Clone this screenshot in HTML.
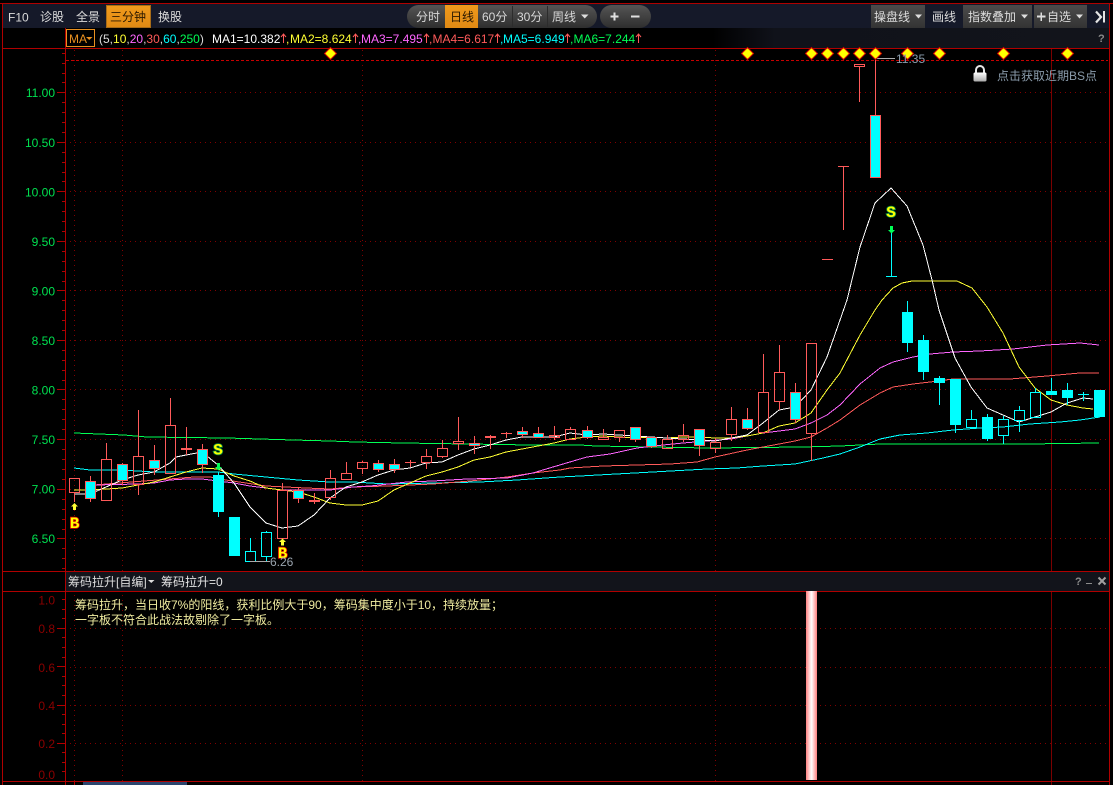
<!DOCTYPE html>
<html><head><meta charset="utf-8"><style>
html,body{margin:0;padding:0;background:#000;width:1113px;height:785px;overflow:hidden}
svg{display:block;font-family:"Liberation Sans","Noto Sans CJK SC",sans-serif;font-size:12px}
</style></head><body>
<svg width="1113" height="785" viewBox="0 0 1113 785" xmlns="http://www.w3.org/2000/svg">
<defs>
<linearGradient id="pill" x1="0" y1="0" x2="0" y2="1"><stop offset="0" stop-color="#555"/><stop offset="1" stop-color="#2e2e2e"/></linearGradient>
<linearGradient id="btn" x1="0" y1="0" x2="0" y2="1"><stop offset="0" stop-color="#4c4c4c"/><stop offset="1" stop-color="#333"/></linearGradient>
<linearGradient id="org" x1="0" y1="0" x2="0" y2="1"><stop offset="0" stop-color="#f09a1c"/><stop offset="1" stop-color="#e08a14"/></linearGradient>
<linearGradient id="bar" x1="0" y1="0" x2="1" y2="0"><stop offset="0" stop-color="#ff8080"/><stop offset=".5" stop-color="#fff"/><stop offset="1" stop-color="#ff8080"/></linearGradient>
<linearGradient id="lock" x1="0" y1="0" x2="0" y2="1"><stop offset="0" stop-color="#fff"/><stop offset="1" stop-color="#aaa"/></linearGradient>
<linearGradient id="mabar" x1="0" y1="0" x2="1" y2="0"><stop offset="0" stop-color="#000"/><stop offset=".62" stop-color="#000"/><stop offset=".68" stop-color="#10121a"/><stop offset="1" stop-color="#12141b"/></linearGradient>
<pattern id="dh" patternUnits="userSpaceOnUse" width="5" height="1"><rect width="1" height="1" fill="#800000"/></pattern>
<pattern id="dv" patternUnits="userSpaceOnUse" width="1" height="5"><rect width="1" height="1" fill="#800000"/></pattern>
</defs>
<rect width="1113" height="785" fill="#000"/>
<rect x="3" y="4" width="1106" height="24" fill="#151929"/>
<rect x="66" y="28" width="1043" height="20" fill="url(#mabar)"/>
<rect x="66" y="572" width="1043" height="19" fill="#12141b"/>

<g shape-rendering="crispEdges" fill="none">
<!-- dotted grid -->
<g fill="url(#dh)">
<rect x="66" y="92" width="1042" height="1"/><rect x="66" y="142" width="1042" height="1"/><rect x="66" y="191" width="1042" height="1"/><rect x="66" y="241" width="1042" height="1"/><rect x="66" y="290" width="1042" height="1"/><rect x="66" y="340" width="1042" height="1"/><rect x="66" y="389" width="1042" height="1"/><rect x="66" y="439" width="1042" height="1"/><rect x="66" y="489" width="1042" height="1"/><rect x="66" y="538" width="1042" height="1"/>
<rect x="66" y="628" width="1042" height="1"/><rect x="66" y="667" width="1042" height="1"/><rect x="66" y="705" width="1042" height="1"/><rect x="66" y="743" width="1042" height="1"/>
</g>
<g fill="url(#dv)">
<rect x="74" y="49" width="1" height="522"/><rect x="122" y="49" width="1" height="522"/><rect x="362" y="49" width="1" height="522"/><rect x="715" y="49" width="1" height="522"/>
<rect x="74" y="592" width="1" height="189"/><rect x="122" y="592" width="1" height="189"/><rect x="362" y="592" width="1" height="189"/><rect x="715" y="592" width="1" height="189"/>
</g>
<path d="M1051.5 49V571M1051.5 592V785" stroke="#7a0000"/>
<path d="M74.5 781V785" stroke="#b00000"/>
<path d="M66 60.5H1108" stroke="#c80000" stroke-dasharray="3 2"/>
<!-- frame -->
<g stroke="#b00000">
<path d="M0 3.5H1113M2.5 3V785M1109.5 3V785M3 48.5H1110M3 571.5H1110M3 591.5H1110M3 781.5H1110M65.5 28V785"/>
<path d="M62 53.500h3M62 63.500h3M62 73.500h3M62 82.500h3M62 102.500h3M62 112.500h3M62 122.500h3M62 132.500h3M62 152.500h3M62 162.500h3M62 172.500h3M62 181.500h3M62 201.500h3M62 211.500h3M62 221.500h3M62 231.500h3M62 251.500h3M62 261.500h3M62 271.500h3M62 281.500h3M62 300.500h3M62 310.500h3M62 320.500h3M62 330.500h3M62 350.500h3M62 360.500h3M62 370.500h3M62 380.500h3M62 399.500h3M62 409.500h3M62 419.500h3M62 429.500h3M62 449.500h3M62 459.500h3M62 469.500h3M62 479.500h3M62 499.500h3M62 509.500h3M62 519.500h3M62 529.500h3M62 548.500h3M62 558.500h3M62 568.500h3"/>
<path d="M57 92.500h8M57 142.500h8M57 191.500h8M57 241.500h8M57 290.500h8M57 340.500h8M57 389.500h8M57 439.500h8M57 489.500h8M57 538.500h8"/>
<path d="M62 599.500h3M62 609.500h3M62 618.500h3M62 637.500h3M62 647.500h3M62 657.500h3M62 676.500h3M62 685.500h3M62 695.500h3M62 714.500h3M62 724.500h3M62 733.500h3M62 752.500h3M62 762.500h3M62 771.500h3"/>
<path d="M57 628.500h8M57 666.500h8M57 705.500h8M57 743.500h8"/>
</g>
<!-- MA lines -->
<polyline stroke="#00ff55" points="74,433 124,435 147,437 227,438 260,439 293,440 330,441 355,442 403,443 467,444 531,445 580,445 596,446 708,448 803,447 840,446 880,444 900,444 980,444 1027,444 1099,443"/>
<polyline stroke="#00ffff" points="74,468 90,470 122,470 154,472 202,472 218,472 234,474 266,477 298,480 330,482 353,482 387,484 433,483 480,482 517,480 560,477 580,476 707,469 737,468 763,466 795,464 823,458 840,454 860,447 880,439 900,435 927,433 953,430 980,428 1003,427 1030,424 1060,422 1080,420 1100,417"/>
<polyline stroke="#ff5a5a" points="94,485 194,477 210,477 226,480 246,483 266,486 306,488 330,489 353,487 387,486 433,484 470,481 507,477 533,473 560,470 570,468 603,466 637,465 670,464 697,462 715,457 747,450 763,447 795,441 811,437 827,428 840,420 860,405 880,393 893,387 913,384 930,382 953,379 1010,379 1047,376 1080,373 1099,373"/>
<polyline stroke="#ff66ff" points="94,485 138,484 154,483 170,480 186,479 202,479 218,481 234,483 250,486 266,488 282,490 330,490 353,487 370,486 407,482 433,481 467,479 507,478 533,473 553,467 580,459 587,457 610,454 637,448 663,445 683,443 707,441 731,439 763,433 795,429 811,423 827,415 840,405 860,384 880,368 893,362 913,357 930,354 953,352 980,351 1013,349 1047,345 1080,343 1099,345"/>
<polyline stroke="#ffff33" points="74,490 90,490 106,489 122,488 138,485 154,482 170,477 186,472 202,468 218,469 234,476 250,481 266,488 282,490 298,492 314,497 330,503 346,505 362,505 378,501 394,490 410,483 426,476 442,472 458,467 474,460 490,457 506,452 522,449 538,446 554,443 570,439 587,437 603,436 619,437 635,438 651,437 667,438 683,437 699,437 715,438 731,438 747,436 763,433 779,426 795,423 811,413 827,390 840,373 860,335 875,310 882,300 893,288 902,283 912,281 957,281 972,288 987,307 1003,333 1019,367 1035,388 1051,400 1067,405 1083,408 1093,409"/>
<polyline stroke="#fff" points="74,494 90,494 106,487 122,480 138,475 154,472 170,463 176,457 186,455 202,452 218,465 234,483 250,507 266,523 282,528 298,526 314,515 330,498 346,487 362,482 378,475 394,470 410,468 426,463 442,462 458,455 474,449 490,445 506,440 522,437 538,437 554,437 570,433 587,435 603,434 619,435 635,436 651,437 667,438 683,439 699,440 715,441 731,438 747,435 763,423 779,410 795,407 811,390 827,357 833,340 847,300 860,247 875,203 891,188 907,206 923,245 932,280 939,310 955,358 971,387 987,408 1003,415 1019,422 1035,417 1051,412 1067,403 1083,398 1093,399"/>
<!-- candles -->
<g stroke="#ff5a5a">
<path d="M69.5 478.5h10v14h-10zM74.5 493V502M101.5 459.5h10v41h-10zM106.5 443V459M133.5 456.5h10v28h-10zM138.5 410V456M138.5 484V495M165.5 425.5h10v48h-10zM170.5 398V425M181 448.5h11M181 449.5h11M186.5 427V455M277.5 490.5h10v48h-10zM282.5 483V490M309 500.5h11M309 501.5h11M314.5 493V504M325.5 478.5h10v19h-10zM330.5 470V478M330.5 498V500M341.5 473.5h10v6h-10zM346.5 462V473M357.5 462.5h10v6h-10zM362.5 461V462M362.5 469V474M405 462.5h11M410.5 460V467M421.5 456.5h10v6h-10zM426.5 449V456M426.5 463V469M437.5 448.5h10v8h-10zM442.5 440V448M442.5 457V458M453.5 441.5h10v2h-10zM458.5 417V441M458.5 444V450M485 436.5h11M485 437.5h11M490.5 435V449M501 433.5h11M506.5 432V438M549.5 435.5h10v2h-10zM554.5 426V435M554.5 438V440M565.5 429.5h10v10h-10zM570.5 427V429M598.5 437.5h10v2h-10zM603.5 429V437M614.5 430.5h10v7h-10zM619.5 438V442M662.5 439.5h10v9h-10zM667.5 435V439M678.5 435.5h10v4h-10zM683.5 424V435M683.5 440V442M710.5 442.5h10v6h-10zM715.5 438V442M715.5 449V453M726.5 419.5h10v15h-10zM731.5 407V419M731.5 435V441M758.5 392.5h10v40h-10zM763.5 354V392M774.5 372.5h10v29h-10zM779.5 345V372M779.5 402V410M806.5 343.5h10v90h-10zM811.5 434V461M822 259.5h11M838 166.5h11M843.5 167V230M854.5 64.5h10v2h-10zM859.5 67V102M875.5 58V115"/>
<path d="M90.5 476V481M90.5 498V502M122.5 463V464M122.5 480V485M154.5 445V460M154.5 468V475M202.5 444V449M202.5 464V473M298.5 487V490M298.5 498V503M378.5 460V463M378.5 469V472M394.5 459V464M394.5 469V473M474.5 436V443M474.5 445V454M522.5 427V431M522.5 434V438M538.5 427V433M587.5 426V430M587.5 437V439M635.5 439V442M651.5 446V448M699.5 445V456M747.5 408V419M747.5 428V430M795.5 383V392M795.5 419V423"/>
<path fill="#00ffff" d="M85.5 481.5h10v17h-10zM117.5 464.5h10v16h-10zM149.5 460.5h10v8h-10zM197.5 449.5h10v15h-10zM293.5 490.5h10v8h-10zM373.5 463.5h10v6h-10zM389.5 464.5h10v5h-10zM469.5 443.5h10v2h-10zM517.5 431.5h10v3h-10zM533.5 433.5h10v4h-10zM582.5 430.5h10v7h-10zM630.5 427.5h10v12h-10zM646.5 437.5h10v9h-10zM694.5 429.5h10v16h-10zM742.5 419.5h10v9h-10zM790.5 392.5h10v27h-10zM870.5 115.5h10v62h-10z"/>
</g>
<g stroke="#00ffff">
<path d="M218.5 472V517M907.5 301V352M923.5 335V380M939.5 376V405M955.5 425V433M987.5 414V441M1051.5 378V391M1067.5 383V405"/>
<path d="M245.5 551.5h10v10h-10zM250.5 538V551M261.5 532.5h10v24h-10zM266.5 531V532M266.5 557V562M966.5 419.5h10v8h-10zM971.5 410V419M971.5 428V429M998.5 419.5h10v16h-10zM1003.5 416V419M1003.5 436V444M1014.5 410.5h10v10h-10zM1019.5 406V410M1019.5 421V432M1030.5 392.5h10v25h-10zM1035.5 388V392M886 276.5h11M891.5 233V276M1078 394.5h11M1083.5 392V401"/>
</g>
<g fill="#00ffff">
<rect x="213" y="475" width="11" height="37"/><rect x="229" y="517" width="11" height="39"/>
<rect x="902" y="312" width="11" height="31"/><rect x="918" y="340" width="11" height="32"/><rect x="934" y="378" width="11" height="5"/><rect x="950" y="379" width="11" height="46"/><rect x="982" y="417" width="11" height="22"/><rect x="1046" y="391" width="11" height="4"/><rect x="1062" y="390" width="11" height="8"/><rect x="1094" y="390" width="11" height="27"/>
</g>
<path d="M250 561.5h20M876 58.5h19" stroke="#aaa"/>
</g>

<!-- pink bar -->
<rect x="806" y="591" width="11" height="189" fill="url(#bar)"/>
<rect x="83" y="782" width="104" height="3" fill="#2b456e"/>

<!-- diamonds -->
<g fill="#ffff00" stroke="#d00000" stroke-width="1">
<path d="M330.5 47.5l6 6-6 6-6-6zM747.5 47.5l6 6-6 6-6-6zM811.5 47.5l6 6-6 6-6-6zM827.5 47.5l6 6-6 6-6-6zM843.5 47.5l6 6-6 6-6-6zM859.5 47.5l6 6-6 6-6-6zM875.5 47.5l6 6-6 6-6-6zM907.5 47.5l6 6-6 6-6-6zM939.5 47.5l6 6-6 6-6-6zM1003.5 47.5l6 6-6 6-6-6zM1067.5 47.5l6 6-6 6-6-6z"/>
</g>

<!-- BS marks -->
<g font-family="'Liberation Mono',monospace" font-weight="bold" font-size="16" text-anchor="middle" fill="#ffff00" stroke-width="1.6" paint-order="stroke">
<text x="74.5" y="528" stroke="#e00000">B</text>
<text x="282.500" y="558" stroke="#e00000">B</text>
<text x="218" y="454.500" stroke="#008c40">S</text>
<text x="891" y="217" stroke="#008c40">S</text>
</g>
<path d="M74.5 503l3.5 3.5h-2v3.5h-3v-3.5h-2zM282.5 538.5l3.5 3.5h-2v3.5h-3v-3.5h-2z" fill="#ffff33"/>
<path d="M218.5 470.5l3.5-3.5h-2v-4h-3v4h-2zM891.5 233.5l3.5-3.5h-2v-4h-3v4h-2z" fill="#00ff55"/>

<text x="270" y="566" fill="#9aa4ae">6.26</text>
<text x="896" y="63" fill="#8a9bab">11.35</text>

<!-- axis labels -->
<g fill="#00e050" text-anchor="end">
<text x="55" y="97">11.00</text><text x="55" y="147">10.50</text><text x="55" y="196.5">10.00</text><text x="55" y="246">9.50</text><text x="55" y="295.5">9.00</text><text x="55" y="345">8.50</text><text x="55" y="394.5">8.00</text><text x="55" y="444">7.50</text><text x="55" y="493.5">7.00</text><text x="55" y="543">6.50</text>
</g>
<g fill="#8c0000" text-anchor="end">
<text x="55" y="604.5">1.0</text><text x="55" y="633">0.8</text><text x="55" y="672">0.6</text><text x="55" y="710">0.4</text><text x="55" y="748">0.2</text><text x="55" y="779">0.0</text>
</g>

<!-- toolbar left -->
<g fill="#dcdcdc">
<text x="8" y="21.5">F10</text><text x="40" y="21">诊股</text><text x="76" y="21">全景</text><text x="158" y="21">换股</text><text x="932" y="21">画线</text>
</g>
<rect x="106.5" y="5.5" width="44" height="22" fill="url(#org)" stroke="#a86c18"/>
<text x="110" y="21" fill="#2a1800" font-size="12">三分钟</text>

<!-- center pills -->
<rect x="407" y="5" width="190" height="23" rx="11.5" fill="url(#pill)"/>
<rect x="445" y="5" width="33" height="23" fill="url(#org)"/>
<path d="M512.5 6V27M547.5 6V27" stroke="#2c2c2c" shape-rendering="crispEdges"/>
<g fill="#d8d8d8">
<text x="416" y="21">分时</text><text x="482" y="21">60分</text><text x="517" y="21">30分</text><text x="552" y="21">周线</text>
</g>
<text x="450" y="21" fill="#2a1800">日线</text>
<path d="M581 14.5h7.5l-3.75 4z" fill="#ddd"/>
<rect x="600" y="5" width="51" height="23" rx="11.5" fill="url(#pill)"/>
<path d="M614.5 12.5v8M610.5 16.5h8M631 16.5h8.5" stroke="#e0e0e0" stroke-width="2" fill="none" shape-rendering="crispEdges"/>

<!-- right buttons -->
<rect x="871" y="5" width="54" height="23" fill="url(#btn)"/>
<rect x="963" y="5" width="69" height="23" fill="url(#btn)"/>
<rect x="1034" y="5" width="53" height="23" fill="url(#btn)"/>
<g fill="#dcdcdc">
<text x="874" y="21">操盘线</text><text x="968" y="21">指数叠加</text><text x="1047" y="21">自选</text>
</g>
<path d="M1037 16.5h8.5M1041.25 12.5v8.5" stroke="#ddd" stroke-width="1.6" fill="none" shape-rendering="crispEdges"/>
<path d="M915 14.5h7l-3.5 4zM1021 14.5h7l-3.5 4zM1076 14.5h7l-3.5 4z" fill="#ddd"/>
<path d="M1096 11.5l5 5.5-5 5.5" stroke="#e4e4e4" stroke-width="2.2" fill="none"/>
<path d="M1104 11v11.5" stroke="#e4e4e4" stroke-width="2.4" fill="none" shape-rendering="crispEdges"/>
<text x="1098" y="42" fill="#8a8a8a" font-weight="bold" font-size="11">?</text>

<!-- MA row -->
<rect x="66.5" y="29.5" width="28" height="17" fill="none" stroke="#e89020" shape-rendering="crispEdges"/>
<text x="69" y="43" fill="#e89020">MA</text>
<path d="M86 37h6.5l-3.25 3z" fill="#e89020"/>
<text x="99" y="43" fill="#dcdcdc">(5,<tspan fill="#ffff33">10</tspan><tspan fill="#dcdcdc">,</tspan><tspan fill="#ff66ff">20</tspan><tspan fill="#dcdcdc">,</tspan><tspan fill="#ff5a5a">30</tspan><tspan fill="#dcdcdc">,</tspan><tspan fill="#00ffff">60</tspan><tspan fill="#dcdcdc">,</tspan><tspan fill="#00ff55">250</tspan><tspan fill="#dcdcdc">)</tspan></text>
<text x="212" y="43" fill="#fff">MA1=10.382</text>
<text x="290" y="43" fill="#ffff33">MA2=8.624</text>
<text x="361" y="43" fill="#ff66ff">MA3=7.495</text>
<text x="432.5" y="43" fill="#ff5a5a">MA4=6.617</text>
<text x="503" y="43" fill="#00ffff">MA5=6.949</text>
<text x="573.5" y="43" fill="#00ff55">MA6=7.244</text>
<text x="286" y="43" fill="#ffff33">,</text><text x="358" y="43" fill="#ff66ff">,</text><text x="429" y="43" fill="#ff5a5a">,</text><text x="500" y="43" fill="#00ffff">,</text><text x="570" y="43" fill="#00ff55">,</text>
<g stroke="#ff5a5a" fill="none" stroke-width="1">
<path d="M283.5 43V34.5M281 37l2.5-3 2.5 3M355.5 43V34.5M353 37l2.5-3 2.5 3M426.5 43V34.5M424 37l2.5-3 2.5 3M497.5 43V34.5M495 37l2.5-3 2.5 3M567.5 43V34.5M565 37l2.5-3 2.5 3M638.5 43V34.5M636 37l2.5-3 2.5 3"/>
</g>

<!-- lock + hint -->
<path d="M976 73v-3a4 4 0 0 1 8 0v3" fill="none" stroke="#e8e8e8" stroke-width="2"/>
<rect x="973.5" y="72.5" width="13" height="9" rx="1.5" fill="url(#lock)"/>
<text x="997" y="80" fill="#8a9bab">点击获取近期BS点</text>

<!-- sub panel header -->
<text x="68" y="586" fill="#dcdcdc">筹码拉升[自编]</text>
<path d="M148 580h6.5l-3.25 3z" fill="#ddd"/>
<text x="161" y="586" fill="#e4e4e4">筹码拉升=0</text>
<text x="1075" y="585" fill="#8c8c8c" font-weight="bold" font-size="11">?</text>
<path d="M1086 583.5h6" stroke="#8c8c8c" fill="none" shape-rendering="crispEdges"/>
<path d="M1098.5 577.5l7 7M1105.5 577.5l-7 7" stroke="#a0a0a0" stroke-width="2" fill="none"/>

<!-- description -->
<g fill="#f0eca0">
<text x="75" y="609">筹码拉升，当日收7%的阳线，获利比例大于90，筹码集中度小于10，持续放量；</text>
<text x="75" y="624">一字板不符合此战法故剔除了一字板。</text>
</g>
</svg>
</body></html>
